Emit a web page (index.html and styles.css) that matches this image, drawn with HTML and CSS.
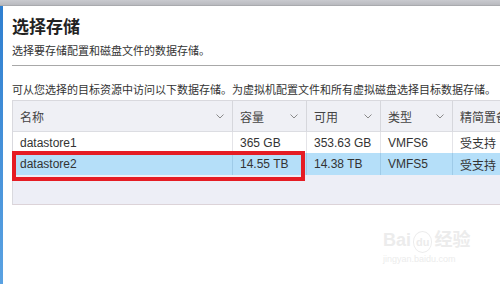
FILE: index.html
```html
<!DOCTYPE html>
<html lang="zh-CN">
<head>
<meta charset="utf-8">
<link rel="stylesheet" href="styles.css">
</head>
<body>
<div class="topbar"></div>
<div class="main">
  <div class="accent"></div>
  <div class="content">
    <h1 class="title">选择存储</h1>
    <p class="subtitle">选择要存储配置和磁盘文件的数据存储。</p>
    <div class="rule"></div>
    <p class="desc">可从您选择的目标资源中访问以下数据存储。为虚拟机配置文件和所有虚拟磁盘选择目标数据存储。</p>
    <div class="table-wrap">
      <div class="grid">
        <div class="th">名称<span class="chev"><svg width="8" height="5" viewBox="0 0 8 5"><path d="M0.5 0.5 L4 4 L7.5 0.5" fill="none" stroke="#8a8a8a" stroke-width="1"/></svg></span></div>
        <div class="th">容量<span class="chev"><svg width="8" height="5" viewBox="0 0 8 5"><path d="M0.5 0.5 L4 4 L7.5 0.5" fill="none" stroke="#8a8a8a" stroke-width="1"/></svg></span></div>
        <div class="th">可用<span class="chev"><svg width="8" height="5" viewBox="0 0 8 5"><path d="M0.5 0.5 L4 4 L7.5 0.5" fill="none" stroke="#8a8a8a" stroke-width="1"/></svg></span></div>
        <div class="th">类型<span class="chev"><svg width="8" height="5" viewBox="0 0 8 5"><path d="M0.5 0.5 L4 4 L7.5 0.5" fill="none" stroke="#8a8a8a" stroke-width="1"/></svg></span></div>
        <div class="th last">精简置备</div>

        <div class="td">datastore1</div>
        <div class="td">365 GB</div>
        <div class="td">353.63 GB</div>
        <div class="td">VMFS6</div>
        <div class="td last">受支持</div>

        <div class="td sel">datastore2</div>
        <div class="td sel">14.55 TB</div>
        <div class="td sel">14.38 TB</div>
        <div class="td sel">VMFS5</div>
        <div class="td sel last">受支持</div>
      </div>
      <div class="empty"></div>
      <div class="highlight"></div>
    </div>
  </div>
</div>
<div class="watermark">
  <div class="wm-logo">Bai<span class="wm-du">du</span>经验</div>
  <div class="wm-url">jingyan.baidu.com</div>
</div>
</body>
</html>
```

FILE: styles.css
```css
html, body {
  margin: 0;
  padding: 0;
  width: 500px;
  height: 284px;
  overflow: hidden;
  background: #ffffff;
  font-family: "Liberation Sans", "Noto Sans CJK SC", sans-serif;
  color: #333333;
}

.topbar {
  height: 5px;
  background: linear-gradient(#c9cacf, #b9babf);
  border-bottom: 1px solid #a9aaae;
}

.main {
  display: flex;
  height: 278px;
}

.accent {
  width: 3px;
  background: linear-gradient(#2f7fd0, #5aa2e2);
  flex: none;
}

.content {
  flex: 1;
  padding-left: 9px;
  position: relative;
}

.title {
  margin: 9px 0 0 0;
  font-size: 17px;
  line-height: 22px;
  font-weight: bold;
  font-family: "Noto Sans CJK SC", sans-serif;
  color: #222222;
}

.subtitle {
  margin: 6px 0 0 0;
  font-size: 11px;
  line-height: 14px;
  font-family: "Noto Sans CJK SC", sans-serif;
  color: #333333;
}

.rule {
  margin-top: 8px;
  height: 1px;
  background: #a8a8a8;
}

.desc {
  margin: 16px 0 0 0;
  font-size: 11px;
  line-height: 14px;
  font-family: "Noto Sans CJK SC", sans-serif;
  color: #333333;
  white-space: nowrap;
}

.table-wrap {
  position: relative;
  margin-top: 4px;
  width: 520px;
  border: 1px solid #d9d9de;
  border-right: none;
  border-bottom-color: #dcd3d8;
}

.grid {
  display: grid;
  grid-template-columns: 220px 74px 74px 72px 80px;
}

.th {
  height: 30px;
  background: #eff0f5;
  border-right: 1px solid #d6d7dc;
  border-bottom: 1px solid #dcdde2;
  display: flex;
  align-items: center;
  justify-content: space-between;
  padding: 0 8px 0 7px;
  font-family: "Noto Sans CJK SC", sans-serif;
  font-size: 12px;
  color: #444444;
  box-sizing: content-box;
}

.th.last, .td.last {
  border-right: none;
}

.chev {
  display: flex;
  align-items: center;
}

.td {
  height: 21px;
  display: flex;
  align-items: center;
  padding: 0 7px;
  font-size: 12px;
  color: #333333;
  background: #ffffff;
  border-right: 1px solid #e4e4e8;
  font-family: "Liberation Sans", "Noto Sans CJK SC", sans-serif;
}

.td.sel {
  height: 22px;
  background: #b5dff9;
  border-right-color: #9fcbe8;
}

.empty {
  height: 29px;
  background: #edeef6;
}

.highlight {
  position: absolute;
  left: -1px;
  top: 50px;
  width: 285px;
  height: 22px;
  border: 4px solid #e51c24;
}

.watermark {
  position: absolute;
  left: 383px;
  top: 230px;
  color: #ececec;
  text-align: left;
}

.wm-logo {
  font-family: "Liberation Sans", "Noto Sans CJK SC", sans-serif;
  font-size: 18px;
  font-weight: bold;
  line-height: 20px;
}

.wm-du {
  display: inline-block;
  border: 1px solid #ececec;
  border-radius: 50%;
  font-size: 11px;
  padding: 0 2px;
  margin: 0 2px;
}

.wm-url {
  font-size: 9px;
  line-height: 12px;
}
```
